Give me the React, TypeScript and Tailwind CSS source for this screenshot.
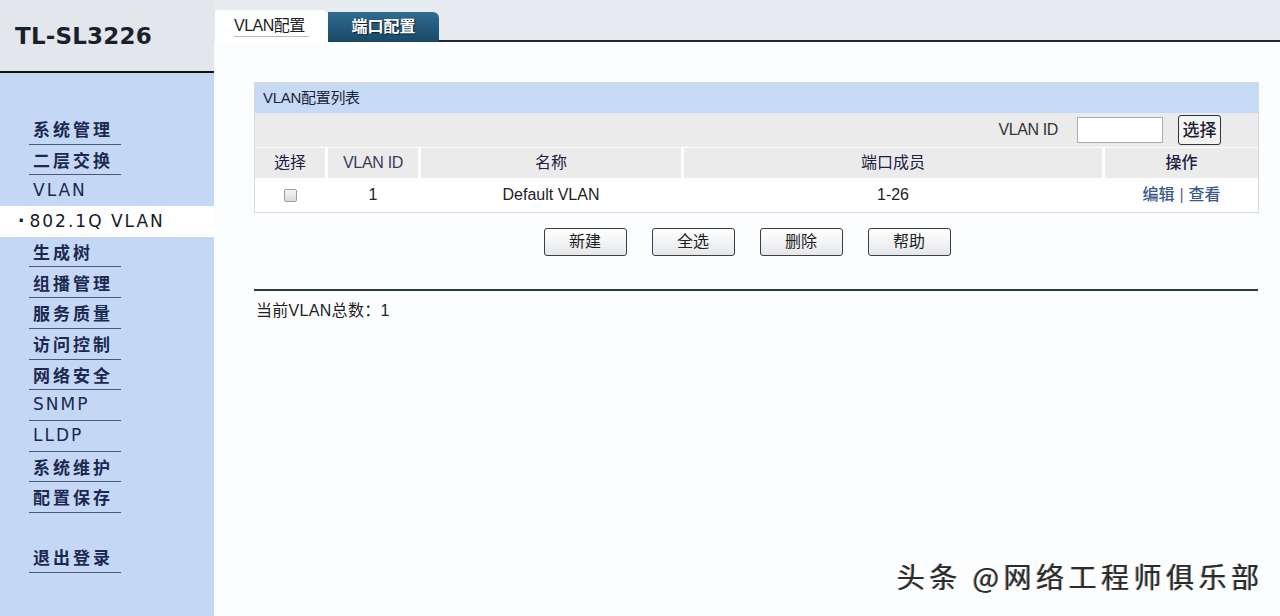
import React from 'react';

type Item = { label: string; latin?: boolean; line?: boolean; active?: boolean };

const MENU: Item[] = [
  { label: '系统管理' },
  { label: '二层交换' },
  { label: 'VLAN', latin: true, line: false },
  { label: '802.1Q VLAN', latin: true, line: false, active: true },
  { label: '生成树' },
  { label: '组播管理' },
  { label: '服务质量' },
  { label: '访问控制' },
  { label: '网络安全' },
  { label: 'SNMP', latin: true },
  { label: 'LLDP', latin: true },
  { label: '系统维护' },
  { label: '配置保存' },
];

const MenuItem: React.FC<{ item: Item }> = ({ item }) => {
  if (item.active) {
    return (
      <div className="h-[30.7px] bg-white flex items-center pl-[18px] text-[#151a2a]">
        <span className="[font-family:'DejaVu_Sans',sans-serif] font-bold">·</span>
        <span className="ml-[5px] tracking-[2px] [font-family:'DejaVu_Sans',sans-serif]">{item.label}</span>
      </div>
    );
  }
  const line = item.line !== false;
  return (
    <div className="h-[30.7px] pl-[29px] flex">
      <div
        className={
          line
            ? 'w-[92px] flex items-center pl-[4px] border-b border-[#4b5a74]'
            : 'w-[92px] flex items-center pl-[4px]'
        }
      >
        <span
          className={
            item.latin
              ? 'tracking-[2px] [font-family:\'DejaVu_Sans\',sans-serif]'
              : 'tracking-[3px] font-semibold'
          }
        >
          {item.label}
        </span>
      </div>
    </div>
  );
};

const Button: React.FC<{ label: string }> = ({ label }) => (
  <button className="w-[83px] h-[28px] rounded-[3px] border-[1.5px] border-[#3a3d42] bg-linear-to-b from-white to-[#e6e7e9] text-[16px] text-[#1e1e1e] leading-none">
    {label}
  </button>
);

export default function App() {
  return (
    <div className="relative flex w-[1280px] h-[616px] overflow-hidden [font-family:'Liberation_Sans','Noto_Sans_CJK_SC',sans-serif] text-[#222]">
      {/* Sidebar */}
      <aside className="w-[214px] flex flex-col shrink-0">
        <div className="h-[71px] bg-[#e3e6eb] flex items-center pl-[15px]">
          <span className="text-[23px] font-bold text-[#1a1f2e] [font-family:'DejaVu_Sans',sans-serif] mt-[1px] tracking-[0.2px]">
            TL-SL3226
          </span>
        </div>
        <div className="h-[2px] bg-[#141414]" />
        <nav className="flex-1 bg-[#c4d8f6] pt-[41px] text-[17px] text-[#1c2850] [font-family:'Noto_Sans_CJK_SC',sans-serif]">
          {MENU.map((m) => (
            <MenuItem key={m.label} item={m} />
          ))}
          <div className="h-[29px]" />
          <MenuItem item={{ label: '退出登录' }} />
        </nav>
      </aside>

      {/* Main */}
      <main className="flex-1 flex flex-col bg-[#fcfdfe]">
        <div className="h-[42px] bg-[#e7eaee] flex items-end">
          <div className="ml-[1px] w-[113px] h-[32px] bg-white rounded-tr-[6px] rounded-tl-[2px] flex items-center pl-[19px]">
            <span className="text-[16px] text-[#222] tracking-[-0.5px] border-b border-[#b9bcc0] leading-[21px] pr-[4px]">
              VLAN配置
            </span>
          </div>
          <div className="w-[111px] h-[30px] bg-linear-to-b from-[#2f6c92] to-[#1a4866] rounded-tr-[6px] flex items-center justify-center">
            <span className="text-[16px] font-bold text-white [text-shadow:1px_1px_1px_#0b2233]">端口配置</span>
          </div>
          <div className="flex-1 h-[2px] bg-[#1c2a33]" />
        </div>

        <div className="flex-1 flex flex-col pl-[40px] pr-[21px] pt-[40px]">
          {/* Panel */}
          <div className="border border-[#d6dadf] bg-white">
            <div className="h-[30px] bg-[#c6daf6] flex items-center pl-[8px]">
              <span className="text-[15px] text-[#1a2535] tracking-[-0.3px]">VLAN配置列表</span>
            </div>
            <div className="h-[34px] bg-[#ebebeb] flex items-center justify-end pr-[37px]">
              <span className="text-[16px] text-[#333] tracking-[-0.4px]">VLAN ID</span>
              <div className="ml-[19px] w-[86px] h-[26px] bg-white border border-[#a9adb2]" />
              <button className="ml-[15px] w-[43px] h-[30px] rounded-[3px] border-[1.5px] border-[#2f3236] bg-[#f3f3f3] text-[17px] font-medium text-[#1e1e30] leading-none">
                选择
              </button>
            </div>
            <div className="mt-[1px] grid grid-cols-[70px_90px_260px_418px_1fr] gap-x-[3px] h-[30px] text-[16px]">
              <div className="bg-[#ebebeb] flex items-center justify-center text-[#1d2040]">选择</div>
              <div className="bg-[#ebebeb] flex items-center justify-center text-[#3b3b58] tracking-[-0.3px]">VLAN ID</div>
              <div className="bg-[#ebebeb] flex items-center justify-center text-[#1d2040]">名称</div>
              <div className="bg-[#ebebeb] flex items-center justify-center text-[#1d2040]">端口成员</div>
              <div className="bg-[#ebebeb] flex items-center justify-center text-[#1d2040] font-medium">操作</div>
            </div>
            <div className="grid grid-cols-[70px_90px_260px_418px_1fr] gap-x-[3px] h-[34px] text-[16px] text-[#222]">
              <div className="flex items-center justify-center">
                <div className="w-[13px] h-[13px] rounded-[2px] border border-[#9aa0a6] bg-linear-to-b from-[#f6f6f6] to-[#d9dadc]" />
              </div>
              <div className="flex items-center justify-center">1</div>
              <div className="flex items-center justify-center">Default VLAN</div>
              <div className="flex items-center justify-center">1-26</div>
              <div className="flex items-center justify-center text-[#3a5a8c] font-medium">
                编辑<span className="mx-[5px] text-[#5a6a80]">|</span>查看
              </div>
            </div>
          </div>
        </div>
      </main>

      {/* Lower content spanning main column */}
      <div className="absolute left-[214px] right-0 top-[228px] flex flex-col">
        <div className="flex justify-center gap-[25px]">
          <Button label="新建" />
          <Button label="全选" />
          <Button label="删除" />
          <Button label="帮助" />
        </div>
        <div className="ml-[40px] mr-[22px] mt-[33px] h-[2px] bg-[#2d3b40]" />
        <div className="ml-[42px] mt-[8px] text-[16px] text-[#1e1e1e] tracking-[0.3px]">当前VLAN总数：1</div>
      </div>

      {/* Watermark */}
      <div className="absolute left-[897px] top-[562px] text-[28px] leading-none tracking-[4.5px] text-[#2b2b2b] [font-family:'Noto_Sans_CJK_SC',sans-serif] [text-shadow:-1px_0_0_#999,1px_1px_0_#fff]">
        头条 @网络工程师俱乐部
      </div>
    </div>
  );
}
